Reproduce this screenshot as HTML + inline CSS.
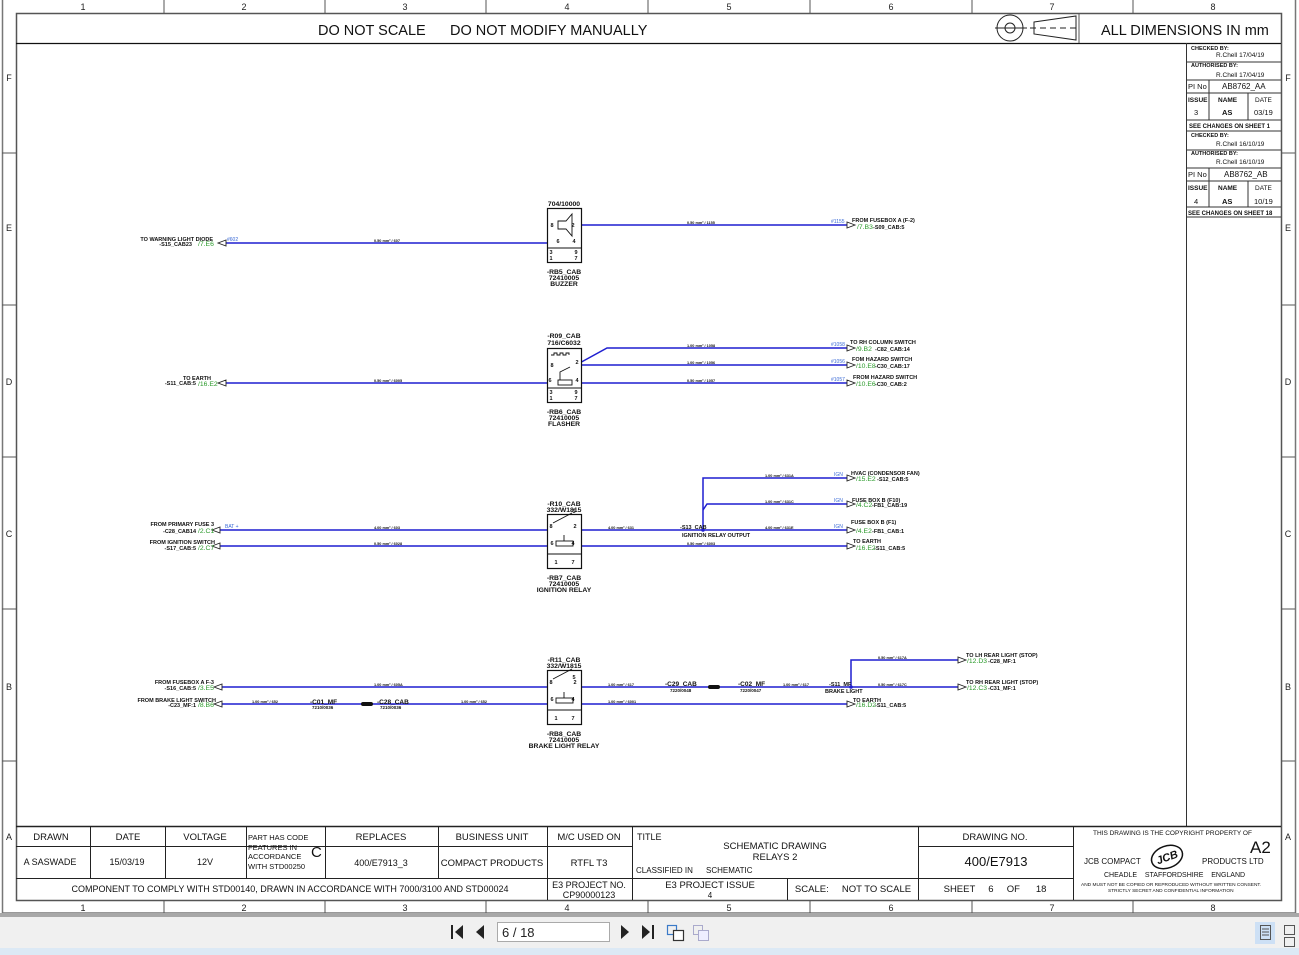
<!DOCTYPE html>
<html><head><meta charset="utf-8">
<style>
html,body{margin:0;padding:0;width:1299px;height:955px;overflow:hidden;background:#fff;font-family:"Liberation Sans",sans-serif}
#tb{position:absolute;left:0;top:913px;width:1299px;height:35px;background:#f0f0f0;border-top:4px solid #a8a8a8;box-sizing:border-box}
#bs{position:absolute;left:0;top:948px;width:1299px;height:7px;background:#dce9f5}
svg text{font-family:"Liberation Sans",sans-serif}
</style></head><body>
<svg width="1299" height="913" viewBox="0 0 1299 913" style="position:absolute;left:0;top:0">
<rect x="2.5" y="-1" width="1293" height="914" fill="#fff" stroke="#777" stroke-width="1.5"/>
<rect x="16.5" y="13.5" width="1265" height="887" fill="none" stroke="#555" stroke-width="1.5"/>
<g stroke="#555" stroke-width="1">
<line x1="164" y1="0" x2="164" y2="13"/><line x1="325" y1="0" x2="325" y2="13"/><line x1="486" y1="0" x2="486" y2="13"/><line x1="648" y1="0" x2="648" y2="13"/><line x1="810" y1="0" x2="810" y2="13"/><line x1="972" y1="0" x2="972" y2="13"/><line x1="1133" y1="0" x2="1133" y2="13"/>
<line x1="164" y1="900" x2="164" y2="913"/><line x1="325" y1="900" x2="325" y2="913"/><line x1="486" y1="900" x2="486" y2="913"/><line x1="648" y1="900" x2="648" y2="913"/><line x1="810" y1="900" x2="810" y2="913"/><line x1="972" y1="900" x2="972" y2="913"/><line x1="1133" y1="900" x2="1133" y2="913"/>
<line x1="2" y1="153" x2="16" y2="153"/><line x1="2" y1="305" x2="16" y2="305"/><line x1="2" y1="457" x2="16" y2="457"/><line x1="2" y1="609" x2="16" y2="609"/><line x1="2" y1="761" x2="16" y2="761"/>
<line x1="1281" y1="153" x2="1295" y2="153"/><line x1="1281" y1="305" x2="1295" y2="305"/><line x1="1281" y1="457" x2="1295" y2="457"/><line x1="1281" y1="609" x2="1295" y2="609"/><line x1="1281" y1="761" x2="1295" y2="761"/>
</g>
<g font-size="9" fill="#222" text-anchor="middle">
<text x="83" y="10">1</text><text x="244" y="10">2</text><text x="405" y="10">3</text><text x="567" y="10">4</text><text x="729" y="10">5</text><text x="891" y="10">6</text><text x="1052" y="10">7</text><text x="1213" y="10">8</text>
<text x="83" y="911">1</text><text x="244" y="911">2</text><text x="405" y="911">3</text><text x="567" y="911">4</text><text x="729" y="911">5</text><text x="891" y="911">6</text><text x="1052" y="911">7</text><text x="1213" y="911">8</text>
<text x="9" y="81">F</text><text x="9" y="231">E</text><text x="9" y="385">D</text><text x="9" y="537">C</text><text x="9" y="690">B</text><text x="9" y="840">A</text>
<text x="1288" y="81">F</text><text x="1288" y="231">E</text><text x="1288" y="385">D</text><text x="1288" y="537">C</text><text x="1288" y="690">B</text><text x="1288" y="840">A</text>
</g>
<line x1="16" y1="43.5" x2="1281" y2="43.5" stroke="#111" stroke-width="1.2"/>
<text x="318" y="35" font-size="14.5" fill="#111">DO NOT SCALE</text>
<text x="450" y="35" font-size="14.5" fill="#111">DO NOT MODIFY MANUALLY</text>
<line x1="1079" y1="13" x2="1079" y2="43" stroke="#555"/>
<text x="1101" y="35" font-size="14.5" fill="#111">ALL DIMENSIONS IN mm</text>
<g stroke="#222" fill="none" stroke-width="1">
<circle cx="1010" cy="28" r="13"/><circle cx="1010" cy="28" r="5"/><line x1="995" y1="28" x2="1027" y2="28"/>
<path d="M1034 22 L1076 16 L1076 40 L1034 34 Z"/><line x1="1030" y1="28" x2="1080" y2="28" stroke-dasharray="6,4"/>
</g>
<g stroke="#333" stroke-width="1" fill="none">
<line x1="1186.5" y1="43" x2="1186.5" y2="826"/>
<line x1="1186" y1="62" x2="1281" y2="62"/><line x1="1186" y1="80" x2="1281" y2="80"/><line x1="1186" y1="93" x2="1281" y2="93"/><line x1="1186" y1="120" x2="1281" y2="120"/><line x1="1186" y1="131" x2="1281" y2="131"/><line x1="1186" y1="150" x2="1281" y2="150"/><line x1="1186" y1="168" x2="1281" y2="168"/><line x1="1186" y1="181" x2="1281" y2="181"/><line x1="1186" y1="207" x2="1281" y2="207"/><line x1="1186" y1="217" x2="1281" y2="217"/>
<line x1="1209" y1="80" x2="1209" y2="120"/><line x1="1248" y1="93" x2="1248" y2="120"/><line x1="1209" y1="168" x2="1209" y2="207"/><line x1="1248" y1="181" x2="1248" y2="207"/>
</g>
<g font-size="6.5" fill="#111" font-weight="bold">
<text x="1191" y="50" font-size="5.5">CHECKED BY:</text><text x="1216" y="57" font-weight="normal">R.Chell 17/04/19</text>
<text x="1191" y="67" font-size="5.5">AUTHORISED BY:</text><text x="1216" y="77" font-weight="normal">R.Chell 17/04/19</text>
<text x="1188" y="89" font-weight="normal" font-size="7.5">PI No</text><text x="1222" y="89" font-weight="normal" font-size="8">AB8762_AA</text>
<text x="1188" y="102">ISSUE</text><text x="1218" y="102">NAME</text><text x="1255" y="102" font-weight="normal">DATE</text>
<text x="1194" y="115" font-weight="normal" font-size="7.5">3</text><text x="1222" y="115" font-size="7.5">AS</text><text x="1254" y="115" font-weight="normal" font-size="7.5">03/19</text>
<text x="1189" y="128" font-size="6">SEE CHANGES ON SHEET 1</text>
<text x="1191" y="137" font-size="5.5">CHECKED BY:</text><text x="1216" y="146" font-weight="normal">R.Chell 16/10/19</text>
<text x="1191" y="155" font-size="5.5">AUTHORISED BY:</text><text x="1216" y="164" font-weight="normal">R.Chell 16/10/19</text>
<text x="1188" y="177" font-weight="normal" font-size="7.5">PI No</text><text x="1224" y="177" font-weight="normal" font-size="8">AB8762_AB</text>
<text x="1188" y="190">ISSUE</text><text x="1218" y="190">NAME</text><text x="1255" y="190" font-weight="normal">DATE</text>
<text x="1194" y="204" font-weight="normal" font-size="7.5">4</text><text x="1222" y="204" font-size="7.5">AS</text><text x="1254" y="204" font-weight="normal" font-size="7.5">10/19</text>
<text x="1188" y="215" font-size="6">SEE CHANGES ON SHEET 18</text>
</g>
<g stroke="#222" stroke-width="1" fill="none">
<line x1="16" y1="826.5" x2="1281" y2="826.5" stroke-width="1.5"/>
<line x1="16" y1="846.5" x2="632" y2="846.5"/><line x1="918" y1="846.5" x2="1073" y2="846.5"/>
<line x1="16" y1="878.5" x2="1073" y2="878.5"/>
<line x1="90.5" y1="826" x2="90.5" y2="878"/><line x1="165.5" y1="826" x2="165.5" y2="878"/><line x1="246.5" y1="826" x2="246.5" y2="878"/><line x1="325.5" y1="826" x2="325.5" y2="878"/><line x1="438.5" y1="826" x2="438.5" y2="878"/>
<line x1="547.5" y1="826" x2="547.5" y2="900"/><line x1="632.5" y1="826" x2="632.5" y2="900"/><line x1="918.5" y1="826" x2="918.5" y2="900"/><line x1="1073.5" y1="826" x2="1073.5" y2="900"/>
<line x1="787.5" y1="878" x2="787.5" y2="900"/>
</g>
<g font-size="9.5" fill="#111" text-anchor="middle">
<text x="51" y="840">DRAWN</text><text x="128" y="840">DATE</text><text x="205" y="840">VOLTAGE</text><text x="381" y="840">REPLACES</text><text x="492" y="840">BUSINESS UNIT</text><text x="589" y="840">M/C USED ON</text>
<text x="50" y="865" font-size="9">A SASWADE</text><text x="127" y="865" font-size="9">15/03/19</text><text x="205" y="865" font-size="9">12V</text><text x="381" y="866" font-size="9">400/E7913_3</text><text x="492" y="866" font-size="9.5">COMPACT PRODUCTS</text><text x="589" y="866">RTFL T3</text>
<text x="290" y="892" font-size="9">COMPONENT TO COMPLY WITH STD00140, DRAWN IN ACCORDANCE WITH 7000/3100 AND STD00024</text>
<text x="589" y="888" font-size="9">E3 PROJECT NO.</text><text x="589" y="898" font-size="9">CP90000123</text>
<text x="710" y="888" font-size="9.5">E3 PROJECT ISSUE</text><text x="710" y="898" font-size="8">4</text>
<text x="775" y="849">SCHEMATIC DRAWING</text><text x="775" y="860">RELAYS 2</text>
<text x="995" y="840">DRAWING NO.</text><text x="996" y="866" font-size="13">400/E7913</text>
<text x="995" y="892" xml:space="preserve">SHEET     6     OF      18</text>
<text x="853" y="892" xml:space="preserve">SCALE:     NOT TO SCALE</text>
</g>
<g font-size="7.5" fill="#111">
<text x="248" y="840">PART HAS CODE</text><text x="248" y="850">FEATURES IN</text><text x="248" y="859">ACCORDANCE</text><text x="248" y="869">WITH STD00250</text>
<text x="311" y="857" font-size="15">C</text>
<text x="637" y="840" font-size="9">TITLE</text>
<text x="636" y="873" font-size="8">CLASSIFIED IN</text><text x="706" y="873" font-size="8">SCHEMATIC</text>
<text x="1093" y="835" font-size="6.5">THIS DRAWING IS THE COPYRIGHT PROPERTY OF</text>
<text x="1250" y="853" font-size="17">A2</text>
<text x="1084" y="864" font-size="8">JCB COMPACT</text><text x="1202" y="864" font-size="8">PRODUCTS LTD</text>
<text x="1104" y="877" font-size="7" xml:space="preserve">CHEADLE    STAFFORDSHIRE    ENGLAND</text>
<text x="1081" y="886" font-size="4.8">AND MUST NOT BE COPIED OR REPRODUCED WITHOUT WRITTEN CONSENT.</text>
<text x="1108" y="892" font-size="4.8">STRICTLY SECRET AND CONFIDENTIAL INFORMATION</text>
</g>
<g transform="translate(1167,857) rotate(-20)"><ellipse cx="0" cy="0" rx="16" ry="11" fill="#fff" stroke="#111" stroke-width="1.5"/><text x="0" y="4" font-size="11" font-weight="bold" text-anchor="middle" fill="#111" font-style="italic">JCB</text></g>

<g stroke="#1f1fd0" stroke-width="1.5" fill="none">
<line x1="226" y1="243" x2="547" y2="243"/><line x1="581" y1="225" x2="847" y2="225"/>
<line x1="226" y1="383" x2="547" y2="383"/><path d="M576 365 L607 348 L847 348"/><line x1="581" y1="365" x2="847" y2="365"/><line x1="581" y1="383" x2="847" y2="383"/>
<line x1="220" y1="530" x2="547" y2="530"/><line x1="220" y1="546" x2="547" y2="546"/><line x1="581" y1="530" x2="847" y2="530"/><line x1="581" y1="546" x2="847" y2="546"/>
<path d="M703 530 L703 478 L847 478"/><path d="M703 510 L707 504 L847 504"/>
<line x1="222" y1="687" x2="547" y2="687"/><line x1="222" y1="704" x2="547" y2="704"/><line x1="581" y1="687" x2="958" y2="687"/><line x1="581" y1="704" x2="847" y2="704"/>
<path d="M851 687 L851 660 L958 660"/>
</g>
<g fill="#1f1fd0"><circle cx="703" cy="530" r="1.8"/><circle cx="851" cy="687" r="1.8"/></g>
<g fill="#fff" stroke="#222" stroke-width="0.9">
<path d="M218 243 L226 240 L226 246 Z"/><path d="M218 383 L226 380 L226 386 Z"/><path d="M212 530 L220 527 L220 533 Z"/><path d="M212 546 L220 543 L220 549 Z"/><path d="M214 687 L222 684 L222 690 Z"/><path d="M214 704 L222 701 L222 707 Z"/>
<path d="M855 225 L847 222 L847 228 Z"/><path d="M855 348 L847 345 L847 351 Z"/><path d="M855 365 L847 362 L847 368 Z"/><path d="M855 383 L847 380 L847 386 Z"/>
<path d="M855 478 L847 475 L847 481 Z"/><path d="M855 504 L847 501 L847 507 Z"/><path d="M855 530 L847 527 L847 533 Z"/><path d="M855 546 L847 543 L847 549 Z"/><path d="M855 704 L847 701 L847 707 Z"/>
<path d="M966 660 L958 657 L958 663 Z"/><path d="M966 687 L958 684 L958 690 Z"/>
</g>
<g stroke="#111" stroke-width="1.2" fill="#fff">
<rect x="547.5" y="208.5" width="34" height="54"/><rect x="547.5" y="348.5" width="34" height="54"/><rect x="547.5" y="514.5" width="34" height="54"/><rect x="547.5" y="670.5" width="34" height="54"/>
</g>
<g stroke="#111" stroke-width="0.9" fill="none">
<line x1="547" y1="248" x2="581" y2="248"/><line x1="547" y1="388" x2="581" y2="388"/><line x1="547" y1="554" x2="581" y2="554"/><line x1="547" y1="710" x2="581" y2="710"/>
<path d="M558 221 L566 221 L572 214 L572 236 L566 229 L558 229 Z"/>
<path d="M551 355 h3 v-2 h3 v2 h3 v-2 h3 v2 h3 v-2 h3 v2"/><rect x="558" y="380" width="14" height="5"/><path d="M560 380 L560 372 L570 367"/>
<path d="M553 523 L572 513"/><rect x="556" y="541" width="17" height="5"/><line x1="564" y1="535" x2="564" y2="541"/>
<path d="M553 679 L572 669"/><rect x="556" y="698" width="17" height="5"/><line x1="564" y1="692" x2="564" y2="698"/>
</g>
<g font-size="5.5" fill="#111" text-anchor="middle" font-weight="bold">
<text x="552" y="227">8</text><text x="558" y="243">6</text><text x="574" y="243">4</text><text x="573" y="227">2</text><text x="551" y="254">3</text><text x="576" y="254">9</text><text x="551" y="260">1</text><text x="576" y="260">7</text>
<text x="552" y="367">8</text><text x="550" y="382">6</text><text x="577" y="382">4</text><text x="577" y="364">2</text><text x="551" y="394">3</text><text x="576" y="394">9</text><text x="551" y="400">1</text><text x="576" y="400">7</text>
<text x="574" y="513">5</text><text x="551" y="528">8</text><text x="575" y="528">2</text><text x="552" y="545">6</text><text x="573" y="545">4</text><text x="556" y="564">1</text><text x="573" y="564">7</text>
<text x="574" y="679">5</text><text x="551" y="684">8</text><text x="575" y="684">2</text><text x="552" y="701">6</text><text x="573" y="701">4</text><text x="556" y="720">1</text><text x="573" y="720">7</text>
</g>
<g font-size="6.8" fill="#111" text-anchor="middle" font-weight="bold">
<text x="564" y="206">704/10000</text>
<text x="564" y="274">-RB5_CAB</text><text x="564" y="280">72410005</text><text x="564" y="286">BUZZER</text>
<text x="564" y="338">-R09_CAB</text><text x="564" y="345">716/C6032</text>
<text x="564" y="414">-RB6_CAB</text><text x="564" y="420">72410005</text><text x="564" y="426">FLASHER</text>
<text x="564" y="506">-R10_CAB</text><text x="564" y="512">332/W1815</text>
<text x="564" y="580">-RB7_CAB</text><text x="564" y="586">72410005</text><text x="564" y="592">IGNITION RELAY</text>
<text x="564" y="662">-R11_CAB</text><text x="564" y="668">332/W1815</text>
<text x="564" y="736">-RB8_CAB</text><text x="564" y="742">72410005</text><text x="564" y="748">BRAKE LIGHT RELAY</text>
</g>
<g font-size="5.5" fill="#111" text-anchor="end" font-weight="bold">
<text x="213" y="241">TO WARNING LIGHT DIODE</text><text x="192" y="246">-S15_CAB23</text>
<text x="211" y="380">TO EARTH</text><text x="196" y="385">-S11_CAB:5</text>
<text x="214" y="526">FROM PRIMARY FUSE 3</text><text x="196" y="533">-C28_CAB14</text>
<text x="215" y="544">FROM IGNITION SWITCH</text><text x="196" y="550">-S17_CAB:5</text>
<text x="214" y="684">FROM FUSEBOX A F-3</text><text x="196" y="690">-S16_CAB:5</text>
<text x="216" y="702">FROM BRAKE LIGHT SWITCH</text><text x="196" y="707">-C23_MF:1</text>
</g>
<g font-size="6.8" fill="#2a9a2a">
<text x="198" y="246">/7.E6</text><text x="198" y="386">/16.E2</text><text x="198" y="533">/2.C1</text><text x="198" y="550">/2.C7</text><text x="198" y="690">/3.E5</text><text x="198" y="707">/8.B6</text>
<text x="857" y="229">/7.B3</text><text x="856" y="351">/9.B2</text><text x="856" y="368">/10.E8</text><text x="856" y="386">/10.E6</text>
<text x="856" y="481">/15.E2</text><text x="856" y="507">/4.C2</text><text x="856" y="533">/4.E2</text><text x="856" y="550">/16.E2</text><text x="856" y="707">/16.D2</text>
<text x="967" y="663">/12.D3</text><text x="967" y="690">/12.C3</text>
</g>
<g font-size="5" fill="#3a6ad6">
<text x="227" y="241">#602</text><text x="225" y="528">BAT +</text><text x="831" y="223">#1155</text><text x="831" y="346">#1058</text><text x="831" y="363">#1056</text><text x="831" y="381">#1057</text><text x="834" y="476">IGN</text><text x="834" y="502">IGN</text><text x="834" y="528">IGN</text>
</g>
<g font-size="5.5" fill="#111" font-weight="bold">
<text x="852" y="222">FROM FUSEBOX A (F-2)</text><text x="873" y="229">-S09_CAB:5</text>
<text x="850" y="344">TO RH COLUMN SWITCH</text><text x="875" y="351">-C82_CAB:14</text>
<text x="852" y="361">FOM HAZARD SWITCH</text><text x="875" y="368">-C30_CAB:17</text>
<text x="853" y="379">FROM HAZARD SWITCH</text><text x="875" y="386">-C30_CAB:2</text>
<text x="851" y="475">HVAC (CONDENSOR FAN)</text><text x="877" y="481">-S12_CAB:5</text>
<text x="852" y="502">FUSE BOX B (F10)</text><text x="872" y="507">-FB1_CAB:19</text>
<text x="851" y="524">FUSE BOX B (F1)</text><text x="872" y="533">-FB1_CAB:1</text>
<text x="853" y="543">TO EARTH</text><text x="874" y="550">-S11_CAB:5</text>
<text x="853" y="702">TO EARTH</text><text x="875" y="707">-S11_CAB:5</text>
<text x="966" y="657">TO LH REAR LIGHT (STOP)</text><text x="988" y="663">-C28_MF:1</text>
<text x="966" y="684">TO RH REAR LIGHT (STOP)</text><text x="988" y="690">-C31_MF:1</text>
<text x="680" y="529">-S13_CAB</text><text x="682" y="537">IGNITION RELAY OUTPUT</text>
<text x="829" y="686">-S11_MF</text><text x="825" y="693">BRAKE LIGHT</text>
<text x="665" y="686" font-size="6.5">-C29_CAB</text><text x="670" y="692" font-size="4.5">7220/0048</text>
<text x="738" y="686" font-size="6.5">-C02_MF</text><text x="740" y="692" font-size="4.5">7220/0047</text>
<text x="310" y="704" font-size="6.5">-C01_MF</text><text x="312" y="709" font-size="4.5">7210/0036</text>
<text x="377" y="704" font-size="6.5">-C28_CAB</text><text x="380" y="709" font-size="4.5">7210/0036</text>
</g>
<g fill="#111"><rect x="361" y="702" width="12" height="4" rx="2"/><rect x="708" y="685" width="12" height="4" rx="2"/></g>
<g font-size="3.8" fill="#111" font-weight="bold">
<text x="374" y="242">0.50 mm² / 607</text><text x="687" y="224">0.50 mm² / 1155</text>
<text x="687" y="347">1.00 mm² / 1058</text><text x="687" y="364">1.00 mm² / 1056</text><text x="374" y="382">0.50 mm² / 6005</text><text x="687" y="382">0.50 mm² / 1057</text>
<text x="765" y="477">1.00 mm² / 631A</text><text x="765" y="503">1.00 mm² / 631C</text><text x="765" y="529">4.00 mm² / 631E</text><text x="608" y="529">4.00 mm² / 631</text><text x="374" y="529">4.00 mm² / 603</text><text x="374" y="545">0.50 mm² / 6028</text><text x="687" y="545">0.50 mm² / 6003</text>
<text x="374" y="686">1.00 mm² / 605A</text><text x="608" y="686">1.00 mm² / 617</text><text x="783" y="686">1.00 mm² / 617</text><text x="608" y="703">1.00 mm² / 6001</text>
<text x="252" y="703">1.00 mm² / 652</text><text x="461" y="703">1.00 mm² / 652</text>
<text x="878" y="659">0.50 mm² / 617A</text><text x="878" y="686">0.50 mm² / 617C</text>
</g>
</svg>
<div id="tb">
<svg width="1299" height="31" style="position:absolute;left:0;top:0">
<g fill="#222">
<path d="M451 8 L451 22 L453 22 L453 8 Z"/><path d="M463 8 L455 15 L463 22 Z"/>
<path d="M484 8 L476 15 L484 22 Z"/>
<path d="M621 8 L629 15 L621 22 Z"/>
<path d="M642 8 L650 15 L642 22 Z"/><path d="M652 8 L652 22 L654 22 L654 8 Z"/>
<path d="M600 14 L606 14 L603 17 Z"/>
</g>
<rect x="497.5" y="5.5" width="112" height="19" fill="#fff" stroke="#aaa"/>
<text x="502" y="20" font-size="13" fill="#222" font-family="Liberation Sans">6 / 18</text>
<g fill="none" stroke="#3a7ac8" stroke-width="1.2"><rect x="667.5" y="8.5" width="9" height="9"/><rect x="673.5" y="13.5" width="10" height="10" stroke="#333" fill="#fff"/></g>
<g fill="none" stroke="#aac" stroke-width="1"><rect x="693.5" y="8.5" width="9" height="9"/><rect x="698.5" y="13.5" width="10" height="10" fill="#eef"/></g>
<rect x="1255" y="5" width="20" height="22" fill="#cde0f5"/>
<g fill="none" stroke="#555"><rect x="1260.5" y="8.5" width="10" height="14"/><line x1="1262" y1="12" x2="1269" y2="12"/><line x1="1262" y1="15" x2="1269" y2="15"/><line x1="1262" y1="18" x2="1269" y2="18"/>
<rect x="1284.5" y="8.5" width="10" height="9"/><rect x="1284.5" y="20.5" width="10" height="9"/></g>
</svg>
</div>
<div id="bs"></div>
</body></html>
